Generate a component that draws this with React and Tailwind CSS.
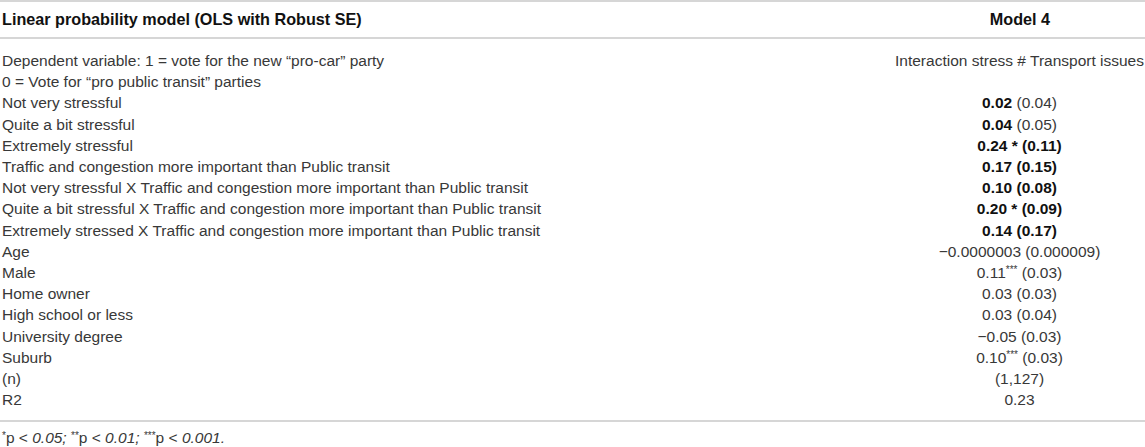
const rows = [
  { label: "Dependent variable: 1 = vote for the new “pro-car” party", value: "Interaction stress # Transport issues" },
  { label: "0 = Vote for “pro public transit” parties", value: "" },
  { label: "Not very stressful", bold: "0.02", rest: " (0.04)" },
  { label: "Quite a bit stressful", bold: "0.04", rest: " (0.05)" },
  { label: "Extremely stressful", bold: "0.24 * (0.11)" },
  { label: "Traffic and congestion more important than Public transit", bold: "0.17 (0.15)" },
  { label: "Not very stressful X Traffic and congestion more important than Public transit", bold: "0.10 (0.08)" },
  { label: "Quite a bit stressful X Traffic and congestion more important than Public transit", bold: "0.20 * (0.09)" },
  { label: "Extremely stressed X Traffic and congestion more important than Public transit", bold: "0.14 (0.17)" },
  { label: "Age", value: "−0.0000003 (0.000009)" },
  { label: "Male", value: "0.11", sup: "***", tail: " (0.03)" },
  { label: "Home owner", value: "0.03 (0.03)" },
  { label: "High school or less", value: "0.03 (0.04)" },
  { label: "University degree", value: "−0.05 (0.03)" },
  { label: "Suburb", value: "0.10", sup: "***", tail: " (0.03)" },
  { label: "(n)", value: "(1,127)" },
  { label: "R2", value: "0.23" },
];

const Value = ({ r }) => {
  if (r.bold !== undefined) {
    return (
      <>
        <span className="font-bold text-[#111]">{r.bold}</span>
        {r.rest}
      </>
    );
  }
  return (
    <>
      {r.value}
      {r.sup && <span className="text-[10px] leading-none align-[5px]">{r.sup}</span>}
      {r.tail}
    </>
  );
};

const App = () => {
  return (
    <div className="w-[1145px] h-[447px] overflow-hidden bg-white text-[#383838] text-[15.5px] leading-[21.2px] font-['Liberation_Sans',Arial,sans-serif]">
      <table className="w-full border-collapse">
        <thead>
          <tr className="border-t-2 border-b-2 border-[#d6d6d6]">
            <th className="text-left font-bold text-[#111] text-[16.2px] pl-[2px] h-[37px] pt-[1px]">
              Linear probability model (OLS with Robust SE)
            </th>
            <th className="text-center font-bold text-[#111] text-[16.2px] w-[250px] pt-[1px]">Model 4</th>
          </tr>
        </thead>
        <tbody>
          {rows.map((r, i) => (
            <tr
              key={i}
              className={i === rows.length - 1 ? "border-b-2 border-[#d6d6d6]" : ""}
            >
              <td
                className={`pl-[2px] whitespace-nowrap ${i === 0 ? "pt-[11px]" : ""} ${
                  i === rows.length - 1 ? "pb-[10px]" : ""
                }`}
              >
                {r.label}
              </td>
              <td
                className={`text-center whitespace-nowrap pr-[1px] ${i === 0 ? "pt-[11px]" : ""} ${
                  i === rows.length - 1 ? "pb-[10px]" : ""
                }`}
              >
                <Value r={r} />
              </td>
            </tr>
          ))}
        </tbody>
      </table>
      <p className="pl-[2px] pt-[5px] leading-[18px]">
        <span className="text-[10px] align-[4px]">*</span>p &lt; <i>0.05;</i>{" "}
        <span className="text-[10px] align-[4px]">**</span>p &lt; <i>0.01;</i>{" "}
        <span className="text-[10px] align-[4px]">***</span>p &lt; <i>0.001.</i>
      </p>
    </div>
  );
};

export default App;
